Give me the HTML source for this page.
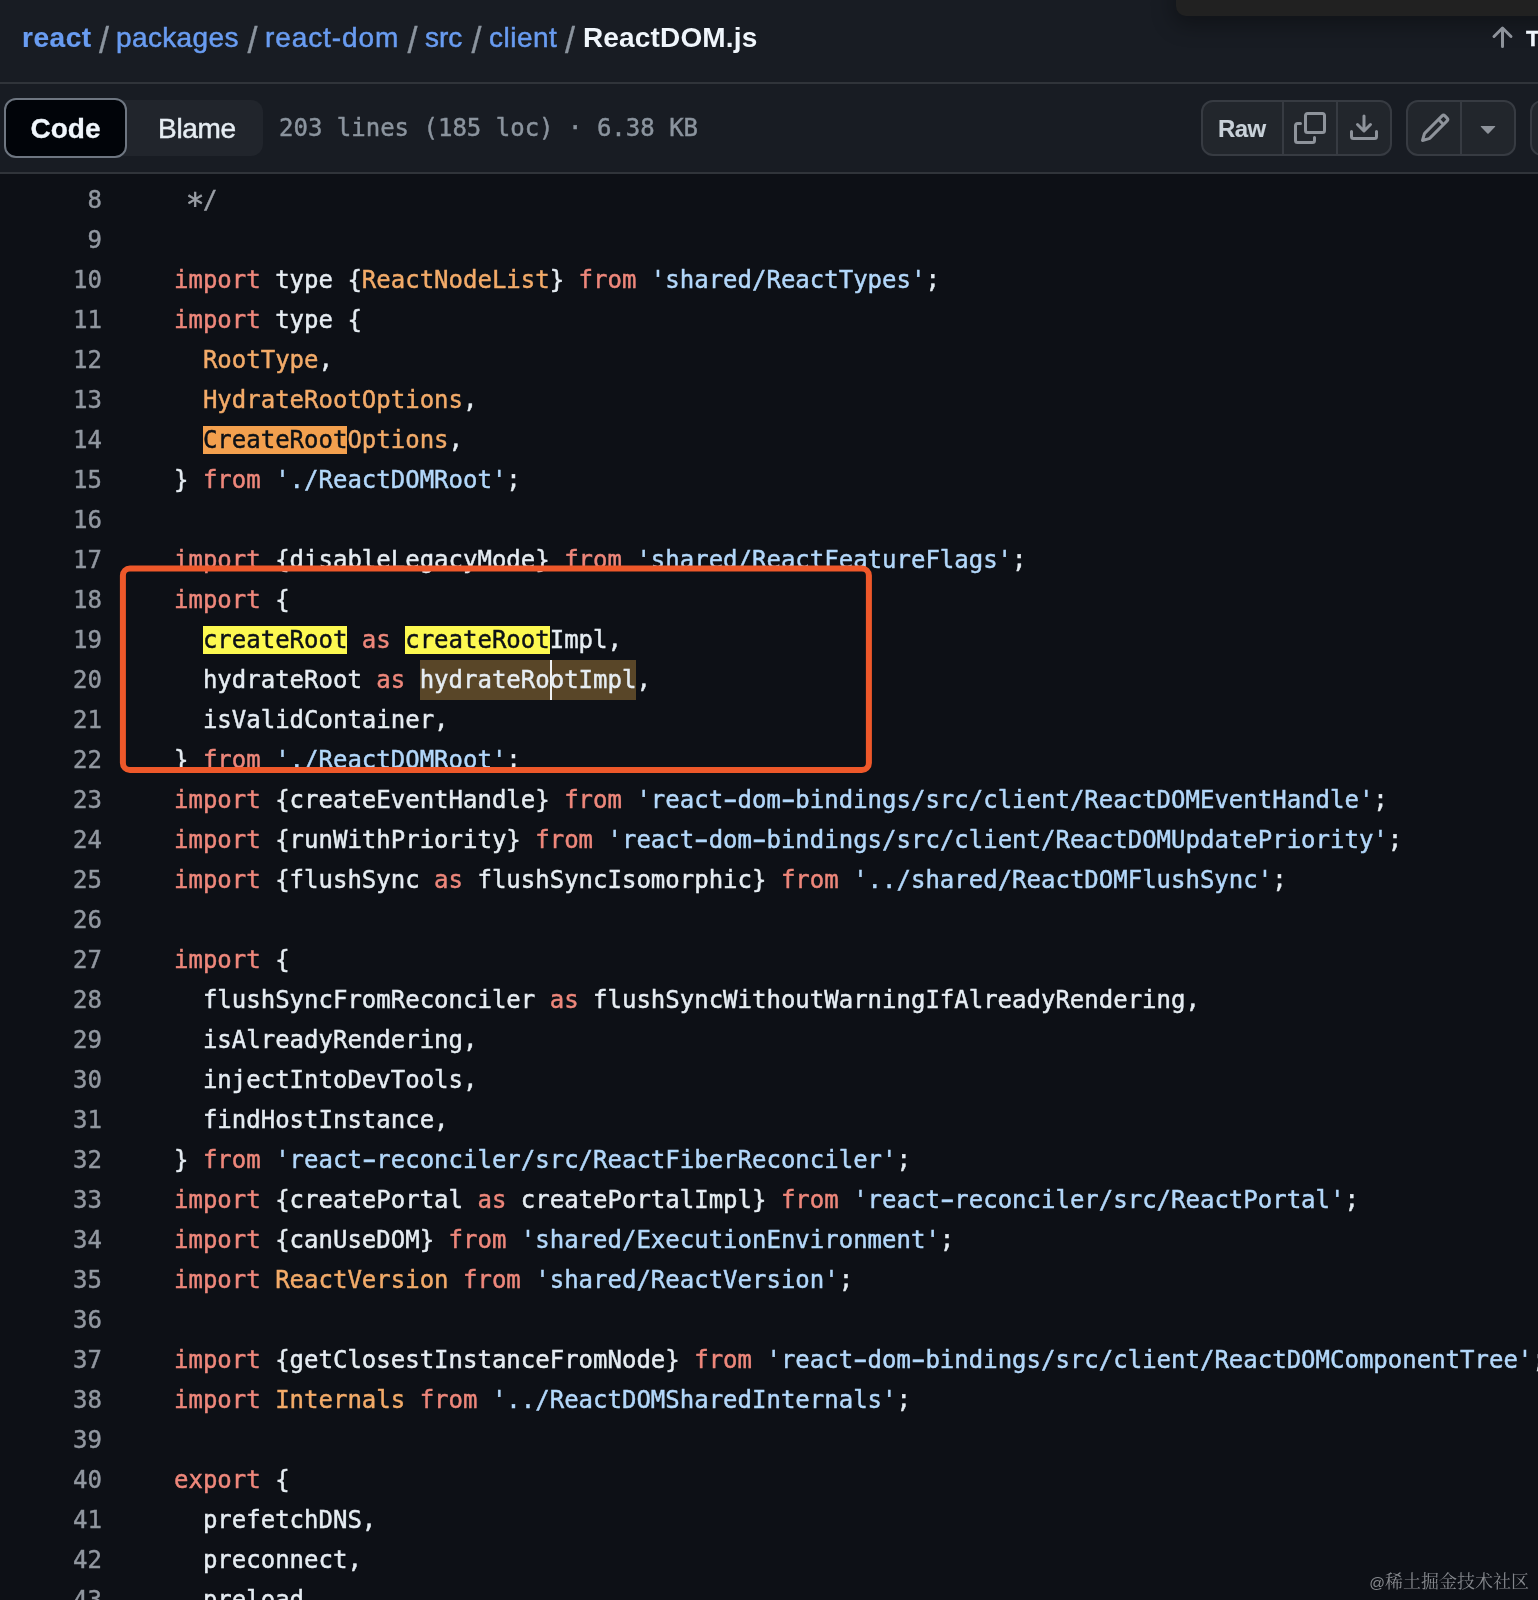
<!DOCTYPE html>
<html lang="en">
<head>
<meta charset="utf-8">
<title>react/packages/react-dom/src/client/ReactDOM.js</title>
<style>
*{box-sizing:border-box;margin:0;padding:0}
html,body{width:1538px;height:1600px;overflow:hidden;background:#0d1016}
body{position:relative;will-change:transform;font-family:"Liberation Sans",sans-serif;color:#e6edf3}
.top{position:absolute;left:0;top:0;width:1538px;height:82px;background:#181c23}
.b1{position:absolute;left:0;top:82px;width:1538px;height:2px;background:#30343a}
.hdr{position:absolute;left:0;top:84px;width:1538px;height:88px;background:#181c23}
.b2{position:absolute;left:0;top:172px;width:1538px;height:2px;background:#30343a}
.crumb{position:absolute;left:0;top:20px;width:800px;height:36px;font-size:28px;line-height:36px;white-space:nowrap;color:#8b949e}
.crumb a,.crumb span{position:absolute;top:0}
.crumb a{color:#699cf1;text-decoration:none;-webkit-text-stroke:.5px}
.crumb a b{-webkit-text-stroke:.2px}
.crumb span.sl{font-size:36px;top:2.5px;-webkit-text-stroke:.3px}
.crumb b{font-weight:700}
.crumb .f{color:#f0f6fc;font-weight:700}
.seg{position:absolute;left:5px;top:100px;width:258px;height:56px;border-radius:12px;background:#21252c}
.seg .on{position:absolute;left:-1px;top:-2px;width:123px;height:60px;border-radius:12px;background:#010409;border:2px solid #6e7681;color:#f0f6fc;font-weight:700;font-size:28px;line-height:57px;text-align:center;-webkit-text-stroke:.3px}
.seg .off{position:absolute;left:153px;top:0;height:56px;color:#e6edf3;font-size:28px;line-height:57px;letter-spacing:-.3px;-webkit-text-stroke:.5px}
.meta{position:absolute;left:279px;top:108px;font-family:"DejaVu Sans Mono","Liberation Mono",monospace;font-size:24px;line-height:40px;color:#8b949e;white-space:pre;-webkit-text-stroke:.45px}
.code{position:absolute;left:0;top:180px;width:1538px;font-family:"DejaVu Sans Mono","Liberation Mono",monospace;font-size:24px;line-height:40px;color:#e6edf3;-webkit-text-stroke:.45px}
.ln{position:relative;height:40px}
.no{position:absolute;left:0;top:0;width:102px;text-align:right;color:#9197a0}
.cd{position:absolute;left:174px;top:0;white-space:pre}
.k{color:#ee877b}.s{color:#b3d8fb}.t{color:#f3ab69}.c{color:#9a9fa6}
.ast{display:inline-block;transform:translateY(4.5px) scale(1.3)}
.ho{background:#f3a04e;color:#0d1117}
.hp{display:inline-block;transform:translateY(-1px) scale(1.7,1.2)}
.hy{background:#fdf950;color:#0d1117}
.hs{background:#594628;display:inline-block;height:40px;vertical-align:top}
.cur{display:inline-block;width:2px;height:40px;background:#f0f3f6;vertical-align:top;margin:0 -2px 0 0}
.box{position:absolute;left:110px;top:555px;width:780px;height:230px;fill:none;stroke:#ee582a;stroke-width:6}
.wm{position:absolute;right:9px;top:1570px;font-family:"Liberation Sans","Noto Serif CJK SC",serif;font-size:18px;line-height:24px;color:#85888d;white-space:nowrap}

.panel{position:absolute;left:1176px;top:-20px;width:400px;height:36px;border-radius:10px;background:#212121;box-shadow:0 6px 22px 3px rgba(0,0,0,.32)}
.topl{position:absolute;left:1526px;top:23px;font-size:22.5px;line-height:32px;font-weight:700;color:#f0f6fc;white-space:nowrap;-webkit-text-stroke:.3px}
.ic{position:absolute;width:32px;height:32px;fill:#8e939b}
.grp{position:absolute;top:100px;height:56px;border-radius:12px;background:#22262c;border:2px solid #373b42}
.grp i{position:absolute;top:0;width:2px;height:52px;background:#373b42}
.raw{position:absolute;left:1218px;top:112.5px;font-size:24px;line-height:32px;font-weight:700;color:#c9d1d9;letter-spacing:-.6px;-webkit-text-stroke:.1px}
</style>
</head>
<body>
<div class="top"></div>
<div class="b1"></div>
<div class="hdr"></div>
<div class="b2"></div>
<div class="crumb"><a style="left:22px;letter-spacing:.54px"><b>react</b></a><span class="sl" style="left:99px">/</span><a style="left:116px;letter-spacing:.37px">packages</a><span class="sl" style="left:247.5px">/</span><a style="left:265px;letter-spacing:.9px">react-dom</a><span class="sl" style="left:407.5px">/</span><a style="left:425px">src</a><span class="sl" style="left:471.5px">/</span><a style="left:489px;letter-spacing:.5px">client</a><span class="sl" style="left:565px">/</span><span class="f" style="left:583px;letter-spacing:.15px">ReactDOM.js</span></div>
<div class="seg"><div class="on">Code</div><div class="off">Blame</div></div>
<div class="meta">203 lines (185 loc) · 6.38 KB</div>
<div class="panel"></div>
<svg class="ic" style="left:1486px;top:21.5px" viewBox="0 0 16 16"><path d="M3.47 7.78a.75.75 0 0 1 0-1.06l4.25-4.25a.75.75 0 0 1 1.06 0l4.25 4.25a.751.751 0 0 1-.018 1.042.751.751 0 0 1-1.042.018L9 4.81v7.44a.75.75 0 0 1-1.5 0V4.81L4.53 7.78a.75.75 0 0 1-1.06 0Z"/></svg>
<div class="topl">Top</div>
<div class="grp" style="left:1201px;width:191px"><i style="left:79px"></i><i style="left:133px"></i></div>
<div class="raw">Raw</div>
<svg class="ic" style="left:1294px;top:112px" viewBox="0 0 16 16"><path d="M0 6.75C0 5.784.784 5 1.75 5h1.5a.75.75 0 0 1 0 1.5h-1.5a.25.25 0 0 0-.25.25v7.5c0 .138.112.25.25.25h7.5a.25.25 0 0 0 .25-.25v-1.5a.75.75 0 0 1 1.5 0v1.5A1.75 1.75 0 0 1 9.25 16h-7.5A1.75 1.75 0 0 1 0 14.25Z"/><path d="M5 1.75C5 .784 5.784 0 6.75 0h7.5C15.216 0 16 .784 16 1.75v7.5A1.75 1.75 0 0 1 14.25 11h-7.5A1.75 1.75 0 0 1 5 9.25Zm1.75-.25a.25.25 0 0 0-.25.25v7.5c0 .138.112.25.25.25h7.5a.25.25 0 0 0 .25-.25v-7.5a.25.25 0 0 0-.25-.25Z"/></svg>
<svg class="ic" style="left:1348px;top:112px" viewBox="0 0 16 16"><path d="M2.75 14A1.75 1.75 0 0 1 1 12.25v-2.5a.75.75 0 0 1 1.5 0v2.5c0 .138.112.25.25.25h10.5a.25.25 0 0 0 .25-.25v-2.5a.75.75 0 0 1 1.5 0v2.5A1.75 1.75 0 0 1 13.25 14Z"/><path d="M7.25 7.689V2a.75.75 0 0 1 1.5 0v5.689l1.97-1.969a.749.749 0 1 1 1.06 1.06l-3.25 3.25a.749.749 0 0 1-1.06 0L4.22 6.78a.749.749 0 1 1 1.06-1.06l1.97 1.969Z"/></svg>
<div class="grp" style="left:1406px;width:110px"><i style="left:52px"></i></div>
<svg class="ic" style="left:1419px;top:112px" viewBox="0 0 16 16"><path d="M11.013 1.427a1.75 1.75 0 0 1 2.474 0l1.086 1.086a1.75 1.75 0 0 1 0 2.474l-8.61 8.61c-.21.21-.47.364-.756.445l-3.251.93a.75.75 0 0 1-.927-.928l.929-3.25c.081-.286.235-.547.445-.758l8.61-8.61Zm.176 4.823L9.75 4.81l-6.286 6.287a.253.253 0 0 0-.064.108l-.558 1.953 1.953-.558a.253.253 0 0 0 .108-.064Zm1.238-3.763a.25.25 0 0 0-.354 0L10.811 3.75l1.439 1.44 1.263-1.263a.25.25 0 0 0 0-.354Z"/></svg>
<svg class="ic" style="left:1472px;top:112px" viewBox="0 0 16 16"><path d="m4.427 7.427 3.396 3.396a.25.25 0 0 0 .354 0l3.396-3.396A.25.25 0 0 0 11.396 7H4.604a.25.25 0 0 0-.177.427Z"/></svg>
<div class="grp" style="left:1530px;width:60px"></div>
<div class="code">
<div class="ln"><span class="no">8</span><span class="cd"><span class="c"> <span class="ast">*</span>/</span></span></div>
<div class="ln"><span class="no">9</span><span class="cd"></span></div>
<div class="ln"><span class="no">10</span><span class="cd"><span class="k">import</span> type {<span class="t">ReactNodeList</span>} <span class="k">from</span> <span class="s">'shared/ReactTypes'</span>;</span></div>
<div class="ln"><span class="no">11</span><span class="cd"><span class="k">import</span> type {</span></div>
<div class="ln"><span class="no">12</span><span class="cd">  <span class="t">RootType</span>,</span></div>
<div class="ln"><span class="no">13</span><span class="cd">  <span class="t">HydrateRootOptions</span>,</span></div>
<div class="ln"><span class="no">14</span><span class="cd">  <span class="ho">CreateRoot</span><span class="t">Options</span>,</span></div>
<div class="ln"><span class="no">15</span><span class="cd">} <span class="k">from</span> <span class="s">'./ReactDOMRoot'</span>;</span></div>
<div class="ln"><span class="no">16</span><span class="cd"></span></div>
<div class="ln"><span class="no">17</span><span class="cd"><span class="k">import</span> {disableLegacyMode} <span class="k">from</span> <span class="s">'shared/ReactFeatureFlags'</span>;</span></div>
<div class="ln"><span class="no">18</span><span class="cd"><span class="k">import</span> {</span></div>
<div class="ln"><span class="no">19</span><span class="cd">  <span class="hy">createRoot</span> <span class="k">as</span> <span class="hy">createRoot</span>Impl,</span></div>
<div class="ln"><span class="no">20</span><span class="cd">  hydrateRoot <span class="k">as</span> <span class="hs">hydrateRo<i class="cur"></i>otImpl</span>,</span></div>
<div class="ln"><span class="no">21</span><span class="cd">  isValidContainer,</span></div>
<div class="ln"><span class="no">22</span><span class="cd">} <span class="k">from</span> <span class="s">'./ReactDOMRoot'</span>;</span></div>
<div class="ln"><span class="no">23</span><span class="cd"><span class="k">import</span> {createEventHandle} <span class="k">from</span> <span class="s">'react<span class="hp">-</span>dom<span class="hp">-</span>bindings/src/client/ReactDOMEventHandle'</span>;</span></div>
<div class="ln"><span class="no">24</span><span class="cd"><span class="k">import</span> {runWithPriority} <span class="k">from</span> <span class="s">'react<span class="hp">-</span>dom<span class="hp">-</span>bindings/src/client/ReactDOMUpdatePriority'</span>;</span></div>
<div class="ln"><span class="no">25</span><span class="cd"><span class="k">import</span> {flushSync <span class="k">as</span> flushSyncIsomorphic} <span class="k">from</span> <span class="s">'../shared/ReactDOMFlushSync'</span>;</span></div>
<div class="ln"><span class="no">26</span><span class="cd"></span></div>
<div class="ln"><span class="no">27</span><span class="cd"><span class="k">import</span> {</span></div>
<div class="ln"><span class="no">28</span><span class="cd">  flushSyncFromReconciler <span class="k">as</span> flushSyncWithoutWarningIfAlreadyRendering,</span></div>
<div class="ln"><span class="no">29</span><span class="cd">  isAlreadyRendering,</span></div>
<div class="ln"><span class="no">30</span><span class="cd">  injectIntoDevTools,</span></div>
<div class="ln"><span class="no">31</span><span class="cd">  findHostInstance,</span></div>
<div class="ln"><span class="no">32</span><span class="cd">} <span class="k">from</span> <span class="s">'react<span class="hp">-</span>reconciler/src/ReactFiberReconciler'</span>;</span></div>
<div class="ln"><span class="no">33</span><span class="cd"><span class="k">import</span> {createPortal <span class="k">as</span> createPortalImpl} <span class="k">from</span> <span class="s">'react<span class="hp">-</span>reconciler/src/ReactPortal'</span>;</span></div>
<div class="ln"><span class="no">34</span><span class="cd"><span class="k">import</span> {canUseDOM} <span class="k">from</span> <span class="s">'shared/ExecutionEnvironment'</span>;</span></div>
<div class="ln"><span class="no">35</span><span class="cd"><span class="k">import</span> <span class="t">ReactVersion</span> <span class="k">from</span> <span class="s">'shared/ReactVersion'</span>;</span></div>
<div class="ln"><span class="no">36</span><span class="cd"></span></div>
<div class="ln"><span class="no">37</span><span class="cd"><span class="k">import</span> {getClosestInstanceFromNode} <span class="k">from</span> <span class="s">'react<span class="hp">-</span>dom<span class="hp">-</span>bindings/src/client/ReactDOMComponentTree'</span>;</span></div>
<div class="ln"><span class="no">38</span><span class="cd"><span class="k">import</span> <span class="t">Internals</span> <span class="k">from</span> <span class="s">'../ReactDOMSharedInternals'</span>;</span></div>
<div class="ln"><span class="no">39</span><span class="cd"></span></div>
<div class="ln"><span class="no">40</span><span class="cd"><span class="k">export</span> {</span></div>
<div class="ln"><span class="no">41</span><span class="cd">  prefetchDNS,</span></div>
<div class="ln"><span class="no">42</span><span class="cd">  preconnect,</span></div>
<div class="ln"><span class="no">43</span><span class="cd">  preload,</span></div>
</div>
<svg class="box" viewBox="0 0 780 230"><rect x="12.9" y="13.5" width="746" height="201.5" rx="7" ry="7"/></svg>
<div class="wm"><span style="font-size:15.5px">@</span>稀土掘金技术社区</div>
</body>
</html>
